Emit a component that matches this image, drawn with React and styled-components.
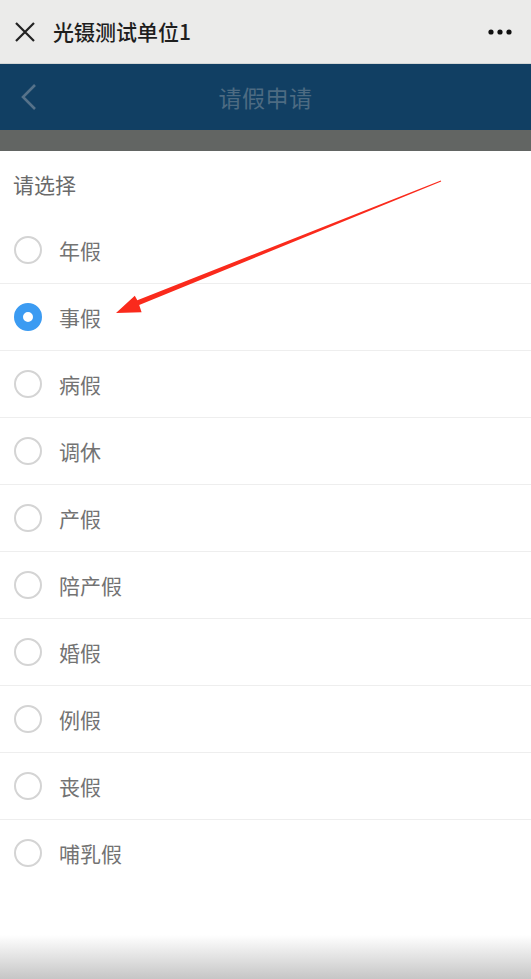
import React, { useState } from "react";
import styled, { createGlobalStyle } from "styled-components";

const GlobalStyle = createGlobalStyle`
  html, body {
    margin: 0;
    padding: 0;
    background: #fff;
  }
  body {
    font-family: "Noto Sans CJK SC", "Noto Sans", sans-serif;
  }
`;

const Page = styled.div`
  position: relative;
  width: 531px;
  min-height: 979px;
  display: flex;
  flex-direction: column;
  background: #fff;
  overflow: hidden;
`;

const TopBar = styled.div`
  height: 63px;
  display: flex;
  align-items: center;
  padding: 0 14px;
  background: #ebebea;
  border-bottom: 1px solid #d3d6d6;
`;

const TopTitle = styled.div`
  margin-left: 17px;
  flex: 1;
  font-size: 21px;
  font-weight: 500;
  color: #1e1e1e;
  line-height: 1;
`;

const NavBar = styled.div`
  position: relative;
  height: 66px;
  display: flex;
  align-items: center;
  justify-content: center;
  background: #113f63;
`;

const BackBtn = styled.div`
  position: absolute;
  left: 20px;
  top: 20px;
  display: flex;
`;

const NavTitle = styled.div`
  font-size: 23px;
  color: #4d6b82;
  letter-spacing: 0.5px;
`;

const Shade = styled.div`
  height: 21px;
  background: #626563;
`;

const Prompt = styled.div`
  height: 66px;
  display: flex;
  align-items: center;
  padding-left: 13px;
  font-size: 21px;
  color: #6a6a6a;
`;

const List = styled.div`
  display: flex;
  flex-direction: column;
`;

const Row = styled.label`
  height: 66px;
  display: flex;
  align-items: center;
  padding-left: 14px;
  border-bottom: 1px solid ${(p) => (p.$last ? "transparent" : "#eeeeee")};
  cursor: pointer;
`;

const Radio = styled.span`
  width: 28px;
  height: 28px;
  box-sizing: border-box;
  border-radius: 50%;
  border: ${(p) => (p.$checked ? "9px solid #3b9bf2" : "2px solid #d4d4d4")};
  background: #fff;
  flex-shrink: 0;
`;

const RowText = styled.span`
  margin-left: 17px;
  font-size: 21px;
  color: #737373;
`;

const Spacer = styled.div`
  flex: 1;
`;

const BottomFade = styled.div`
  height: 44px;
  background: linear-gradient(to bottom, #ffffff, #c6c6c6);
`;

const ArrowLayer = styled.svg`
  position: absolute;
  left: 0;
  top: 0;
  pointer-events: none;
`;

const types = ["年假", "事假", "病假", "调休", "产假", "陪产假", "婚假", "例假", "丧假", "哺乳假"];

const App = () => {
  const [selected, setSelected] = useState(1);

  return (
    <Page>
      <GlobalStyle />
      <TopBar>
        <svg width="22" height="22" viewBox="0 0 22 22">
          <path d="M2 2 L20 20 M20 2 L2 20" stroke="#222" strokeWidth="2.2" fill="none" />
        </svg>
        <TopTitle>光镊测试单位1</TopTitle>
        <svg width="34" height="8" viewBox="0 0 34 8">
          <circle cx="8" cy="4" r="2.6" fill="#111" />
          <circle cx="17" cy="4" r="2.6" fill="#111" />
          <circle cx="26" cy="4" r="2.6" fill="#111" />
        </svg>
      </TopBar>
      <NavBar>
        <BackBtn>
          <svg width="18" height="26" viewBox="0 0 18 26">
            <path d="M15 1 L3 13 L15 25" stroke="#56728a" strokeWidth="2.6" fill="none" />
          </svg>
        </BackBtn>
        <NavTitle>请假申请</NavTitle>
      </NavBar>
      <Shade />
      <Prompt>请选择</Prompt>
      <List>
        {types.map((t, i) => (
          <Row key={t} $last={i === types.length - 1} onClick={() => setSelected(i)}>
            <Radio $checked={selected === i} />
            <RowText>{t}</RowText>
          </Row>
        ))}
      </List>
      <Spacer />
      <BottomFade />
      {/* red annotation arrow */}
      <ArrowLayer width="531" height="979" viewBox="0 0 531 979">
        <polygon
          points="116,313 141.6,312.3 139.2,304.9 441.2,181.5 440.8,180.5 137.3,300.2 134.8,295.7"
          fill="#fa2a1c"
        />
      </ArrowLayer>
    </Page>
  );
};

export default App;
